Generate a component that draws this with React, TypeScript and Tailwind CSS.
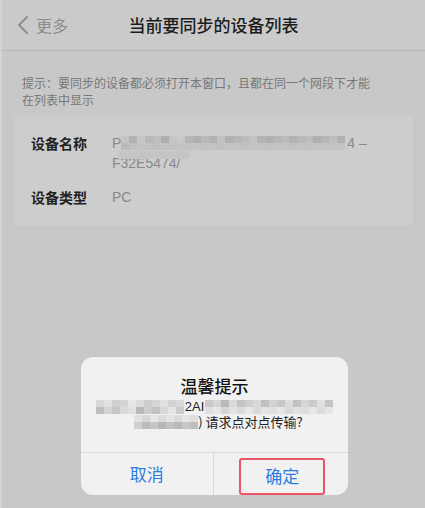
import { ChevronLeft } from "lucide-react";

const font = { fontFamily: '"Noto Sans CJK SC", "Noto Sans", sans-serif' };
const latin = { fontFamily: '"Liberation Sans", Arial, sans-serif' };

// masked-out (mosaic) text, as in the screenshot
function Mosaic({ shades, cell = 8, rows = 2 }: { shades: string[]; cell?: number; rows?: number }) {
  const cols = Math.ceil(shades.length / rows);
  return (
    <span
      className="inline-grid align-middle"
      style={{ gridTemplateColumns: `repeat(${cols}, ${cell}px)`, gridAutoRows: `${cell - 1}px` }}
    >
      {shades.map((c, i) => (
        <span key={i} style={{ backgroundColor: c }} />
      ))}
    </span>
  );
}

const nameShades = [
  "#c4c4c4", "#b2b2b2", "#c6c6c6", "#b8b8b8", "#bdbdbd", "#aeaeae", "#c5c5c5", "#c9c9c9", "#b5b5b5", "#b0b0b0", "#b9b9b9", "#b3b3b3", "#c2c2c2", "#b1b1b1", "#b7b7b7", "#bcbcbc", "#c3c3c3", "#b4b4b4", "#afafaf", "#b6b6b6", "#bbbbbb", "#b2b2b2", "#b8b8b8", "#bdbdbd", "#b0b0b0", "#b5b5b5", "#bfbfbf", "#b1b1b1",
  "#bababa", "#c0c0c0", "#c4c4c4", "#c2c2c2", "#c0c0c0", "#c3c3c3", "#c1c1c1", "#c4c4c4", "#c3c3c3", "#c5c5c5", "#c2c2c2", "#c4c4c4", "#c0c0c0", "#c5c5c5", "#c3c3c3", "#c1c1c1", "#c5c5c5", "#c4c4c4", "#c2c2c2", "#c5c5c5", "#c3c3c3", "#c1c1c1", "#c4c4c4", "#c2c2c2", "#c5c5c5", "#c4c4c4", "#c3c3c3", "#c4c4c4",
];

const msgA = [
  "#d8d8d8", "#e2e2e2", "#cfcfcf", "#d4d4d4", "#e6e6e6", "#dcdcdc", "#cccccc", "#d6d6d6", "#e0e0e0", "#d2d2d2", "#d9d9d9",
  "#bdbdbd", "#d3d3d3", "#c6c6c6", "#dadada", "#e1e1e1", "#b8b8b8", "#cdcdcd", "#c2c2c2", "#d7d7d7", "#e4e4e4", "#cbcbcb",
];
const msgB = [
  "#c9c9c9", "#d5d5d5", "#bababa", "#dadada", "#c4c4c4", "#cfcfcf", "#d8d8d8", "#bfbfbf", "#d1d1d1", "#c7c7c7", "#dcdcdc", "#c2c2c2", "#d6d6d6", "#cbcbcb", "#e0e0e0", "#c5c5c5",
  "#dedede", "#e6e6e6", "#d6d6d6", "#e3e3e3", "#dadada", "#e8e8e8", "#d9d9d9", "#e4e4e4", "#dfdfdf", "#e6e6e6", "#d8d8d8", "#e2e2e2", "#dddddd", "#e7e7e7", "#dcdcdc", "#e5e5e5",
];
const msgC = [
  "#e2e2e2", "#d7d7d7", "#e6e6e6", "#dbdbdb", "#e4e4e4", "#d9d9d9", "#e5e5e5", "#dedede",
  "#cfcfcf", "#bcbcbc", "#c6c6c6", "#b6b6b6", "#c2c2c2", "#b9b9b9", "#c8c8c8", "#bfbfbf",
];

export default function App() {
  return (
    <div
      className="relative h-[508px] w-[425px] overflow-hidden border-l-2 border-[#d3d3d3] bg-[#c8c8c8]"
      style={font}
    >
      <div className="relative flex h-[51px] items-center border-b border-[#b6b6b6] bg-[#cacaca]">
        <div className="flex items-center pl-[5px] text-[#8c8c8c]">
          <ChevronLeft size={32} strokeWidth={1.4} />
          <span className="-ml-[3px] text-[16px]">更多</span>
        </div>
        <div className="pointer-events-none absolute inset-x-0 text-center text-[17px] font-medium text-[#1c1c1c]">
          当前要同步的设备列表
        </div>
      </div>

      <div className="px-[12px] pt-[23px]">
        <p className="pl-[8px] pr-[20px] text-[12px] leading-[17px] text-[#777777]">
          提示：要同步的设备都必须打开本窗口，且都在同一个网段下才能
          <br />
          在列表中显示
        </p>

        <div className="mt-[7px] rounded-[4px] bg-[#cdcdcd] pb-[19px] pl-[17px] pr-[20px] pt-[18px]">
          <div className="flex">
            <span className="w-[81px] shrink-0 text-[14px] font-bold leading-[20px] text-[#222222]">设备名称</span>
            <div className="text-[14px] leading-[20px] text-[#8a8a8a]" style={latin}>
              <div className="flex items-center">
                <span>P</span>
                <Mosaic shades={nameShades} cell={8} />
                <span className="ml-[2px]">4 –</span>
              </div>
              <div className="relative">
                <span>F32E5474/</span>
                <span className="absolute left-[6px] top-[-2px] h-[8px] w-[72px] bg-[#c5c5c5]" />
              </div>
            </div>
          </div>
          <div className="mt-[14px] flex">
            <span className="w-[81px] shrink-0 text-[14px] font-bold leading-[20px] text-[#222222]">设备类型</span>
            <span className="text-[14px] leading-[20px] text-[#8a8a8a]" style={latin}>PC</span>
          </div>
        </div>
      </div>

      <div className="absolute left-[79px] top-[357px] w-[267px] overflow-hidden rounded-[12px] bg-[#f1f1f1]">
        <div className="flex h-[95px] flex-col items-center px-[16px] pt-[18px]">
          <div className="text-[17px] font-medium leading-[22px] text-[#111111]">温馨提示</div>
          <div className="mt-[2px] flex items-center text-[13px] leading-[15px] text-[#222222]">
            <Mosaic shades={msgA} cell={8} />
            <span className="px-[1px]" style={latin}>2AI</span>
            <Mosaic shades={msgB} cell={8} />
          </div>
          <div className="flex items-center pl-[8px] text-[13px] leading-[16px] text-[#222222]">
            <Mosaic shades={msgC} cell={8} />
            <span>) 请求点对点传输?</span>
          </div>
        </div>
        <div className="flex h-[43px] border-t border-[#d9d9d9]">
          <button className="flex flex-1 items-center justify-center text-[17px] text-[#2a7de1]">取消</button>
          <div className="w-px bg-[#d9d9d9]" />
          <div className="flex flex-1 items-center justify-center pb-[1px] pl-[3px] pt-[5px]">
            <button className="flex h-[37px] w-[86px] items-center justify-center rounded-[3px] border-2 border-[#ec5468] text-[17px] text-[#2a7de1]">
              确定
            </button>
          </div>
        </div>
      </div>
    </div>
  );
}
